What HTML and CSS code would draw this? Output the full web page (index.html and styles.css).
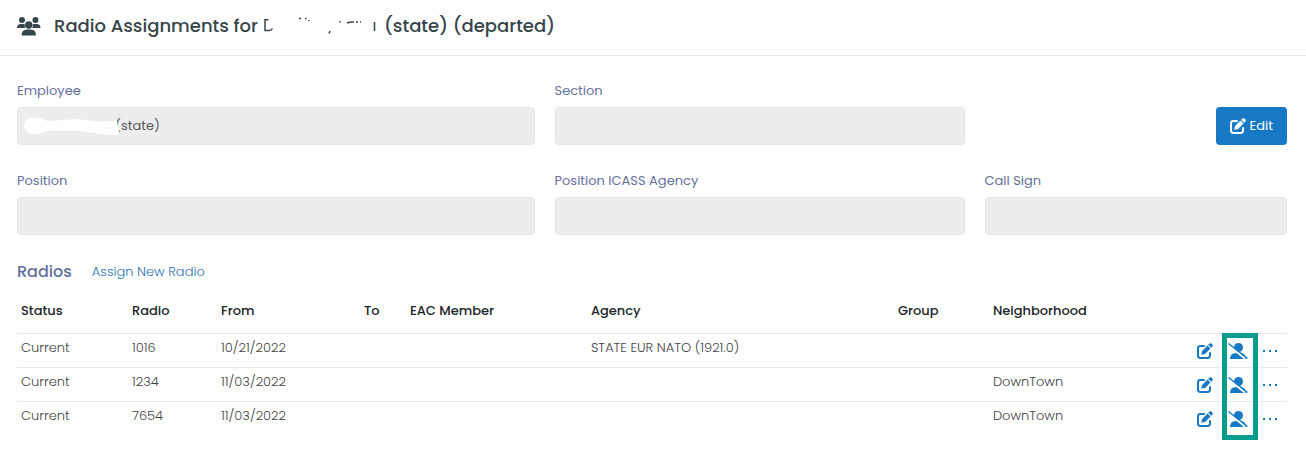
FILE: index.html
```
<!DOCTYPE html>
<html lang="en">

<head>
    <meta charset="UTF-8" />
    <meta name="viewport" content="width=device-width, initial-scale=1.0" />
    <title>Radio Assignments</title>
    <link rel="stylesheet" href="styles.css">
</head>

<body>
    <svg class="sprite" aria-hidden="true">
        <symbol id="icon-edit" viewBox="0 0 16 16">
            <path d="M7 3H3.400Q1 3 1 5.400V12.600Q1 15 3.400 15H10.600Q13 15 13 12.600V10" fill="none" stroke="currentColor" stroke-width="2" stroke-linecap="round" />
            <path d="M4.200 11.800L5.100 7.900L10.500 2.500L13.500 5.500L8.100 10.900Z" fill="currentColor" />
            <path d="M11.200 1.800L12.500 .6Q13.500 -.2 14.500 .6L15.400 1.500Q16.200 2.500 15.400 3.500L14.200 4.800Z" fill="currentColor" />
        </symbol>
        <symbol id="icon-unassign" viewBox="0 0 20 16">
            <circle cx="10.500" cy="4.500" r="4.500" fill="currentColor" />
            <path d="M2 16Q2 10 8 10H12Q18 10 18 16Z" fill="currentColor" />
            <path d="M0 2L17 15.500" stroke="#fff" stroke-width="2" />
            <path d="M.5 .5L19.500 15.500" stroke="currentColor" stroke-width="1.400" />
        </symbol>
    </svg>

    <header class="page-header">
        <svg class="users-icon" viewBox="0 0 24 19" aria-hidden="true">
            <circle cx="5" cy="3" r="3" />
            <circle cx="18.500" cy="3" r="3" />
            <path d="M0 11Q0 7 4 7H6.500Q7.300 7 8 7.400Q7.300 9.200 8.300 11Z" />
            <path d="M23.500 11Q23.500 7 19.500 7H17Q16.200 7 15.500 7.400Q16.200 9.200 15.200 11Z" />
            <circle cx="11.750" cy="8" r="3.700" />
            <path d="M4.500 18.500Q4.500 12.500 10 12.500H13.500Q19 12.500 19 18.500Z" />
        </svg>
        <h1>
            <span>Radio Assignments for</span>
            <svg class="scraps" viewBox="0 0 116 18" aria-hidden="true">
                <path d="M5.500 2.700H2V13.500H6Q8.500 13.500 9.500 11.500" />
                <path d="M36 1.500H38M42 1.500H43.500M46 3V4M67 14L66 16.500M77 4V5.500M84 6L88 5H91M93 5H95M97 5H98M111.500 5V14" />
            </svg>
            <span>(state) (departed)</span>
        </h1>
    </header>

    <main>
        <form class="details">
            <div class="field wide">
                <label for="employee">Employee</label>
                <div class="masked">
                    <input id="employee" type="text" value="(state)" readonly>
                    <svg class="smear" viewBox="0 0 96 18" aria-hidden="true">
                        <path d="M3 2Q8 0 15 1Q19 3 24 4L54 2Q60 3 68 4Q76 5 84 4H93Q93 8 95 11V18H84L56 14Q35 13 23 14Q15 18 6 17Q1 14 0 9Q0 5 3 2Z" />
                    </svg>
                </div>
            </div>
            <div class="field medium">
                <label for="section">Section</label>
                <input id="section" type="text" readonly>
            </div>
            <div class="field narrow actions">
                <button type="button" class="edit-button">
                    <svg class="icon"><use href="#icon-edit" /></svg>
                    Edit
                </button>
            </div>
            <div class="field wide">
                <label for="position">Position</label>
                <input id="position" type="text" readonly>
            </div>
            <div class="field medium">
                <label for="agency">Position ICASS Agency</label>
                <input id="agency" type="text" readonly>
            </div>
            <div class="field narrow">
                <label for="call-sign">Call Sign</label>
                <input id="call-sign" type="text" readonly>
            </div>
        </form>

        <div class="section-title">
            <h2>Radios</h2>
            <a href="#">Assign New Radio</a>
        </div>

        <div class="radios">
            <table>
                <thead>
                    <tr>
                        <th class="col-status">Status</th>
                        <th class="col-radio">Radio</th>
                        <th class="col-from">From</th>
                        <th class="col-to">To</th>
                        <th class="col-eac">EAC Member</th>
                        <th class="col-agency">Agency</th>
                        <th class="col-group">Group</th>
                        <th class="col-area">Neighborhood</th>
                        <th class="col-tools"></th>
                    </tr>
                </thead>
                <tbody>
                    <tr>
                        <td>Current</td>
                        <td>1016</td>
                        <td>10/21/2022</td>
                        <td></td>
                        <td></td>
                        <td>STATE EUR NATO (1921.0)</td>
                        <td></td>
                        <td></td>
                        <td>
                            <div class="tools">
                                <a href="#" aria-label="Edit"><svg class="icon"><use href="#icon-edit" /></svg></a>
                                <a href="#" aria-label="Unassign"><svg class="icon-wide"><use href="#icon-unassign" /></svg></a>
                                <a href="#" class="more" aria-label="More"><i></i><i></i><i></i></a>
                            </div>
                        </td>
                    </tr>
                    <tr>
                        <td>Current</td>
                        <td>1234</td>
                        <td>11/03/2022</td>
                        <td></td>
                        <td></td>
                        <td></td>
                        <td></td>
                        <td>DownTown</td>
                        <td>
                            <div class="tools">
                                <a href="#" aria-label="Edit"><svg class="icon"><use href="#icon-edit" /></svg></a>
                                <a href="#" aria-label="Unassign"><svg class="icon-wide"><use href="#icon-unassign" /></svg></a>
                                <a href="#" class="more" aria-label="More"><i></i><i></i><i></i></a>
                            </div>
                        </td>
                    </tr>
                    <tr>
                        <td>Current</td>
                        <td>7654</td>
                        <td>11/03/2022</td>
                        <td></td>
                        <td></td>
                        <td></td>
                        <td></td>
                        <td>DownTown</td>
                        <td>
                            <div class="tools">
                                <a href="#" aria-label="Edit"><svg class="icon"><use href="#icon-edit" /></svg></a>
                                <a href="#" aria-label="Unassign"><svg class="icon-wide"><use href="#icon-unassign" /></svg></a>
                                <a href="#" class="more" aria-label="More"><i></i><i></i><i></i></a>
                            </div>
                        </td>
                    </tr>
                </tbody>
            </table>
            <div class="highlight"></div>
        </div>
    </main>
</body>

</html>
```
FILE: styles.css
```
* {
    box-sizing: border-box;
    margin: 0;
    padding: 0;
}

body {
    background-color: #fff;
    color: #444;
    font-family: Poppins, Inter, sans-serif;
    font-size: 13px;
    line-height: 20px;
}

a {
    color: #2f74b5;
    text-decoration: none;
}

.sprite {
    display: block;
    height: 0;
    width: 0;
}

.page-header {
    align-items: center;
    border-bottom: 1px solid #ebebeb;
    display: flex;
    gap: 13px;
    padding: 12px 17px 15px;
}

.users-icon {
    fill: #36454a;
    height: 19px;
    width: 24px;
}

h1 {
    align-items: center;
    color: #36454a;
    display: flex;
    font-size: 18px;
    font-weight: 500;
    gap: 5px;
    line-height: 28px;
}

.scraps {
    fill: none;
    height: 18px;
    stroke: #36454a;
    stroke-width: 1.5;
    width: 116px;
}

main {
    padding: 25px 19px 20px 17px;
}

.details {
    display: grid;
    gap: 26px 20px;
    grid-template-columns: repeat(12, minmax(0, 1fr));
}

.field {
    display: flex;
    flex-direction: column;
    gap: 6px;
}

.wide {
    grid-column: span 5;
}

.medium {
    grid-column: span 4;
}

.narrow {
    grid-column: span 3;
}

label {
    color: #64709c;
}

input {
    background-color: #ededed;
    border: 1px solid #e2e4ee;
    border-radius: 4px;
    color: #555;
    font: inherit;
    height: 38px;
    padding: 0 8px;
    width: 100%;
}

.masked {
    position: relative;
}

.masked input {
    display: block;
    padding-left: 97px;
}

.smear {
    fill: #fff;
    height: 18px;
    left: 7px;
    position: absolute;
    top: 10px;
    width: 96px;
}

.actions {
    align-items: flex-end;
    justify-content: flex-end;
}

.edit-button {
    align-items: center;
    background-color: #1779c4;
    border: none;
    border-radius: 4px;
    color: #fff;
    cursor: pointer;
    display: flex;
    font: inherit;
    gap: 4px;
    height: 38px;
    padding: 0 14px;
}

.icon {
    display: block;
    height: 16px;
    width: 16px;
}

.icon-wide {
    display: block;
    height: 16px;
    width: 20px;
}

.section-title {
    align-items: center;
    display: flex;
    gap: 20px;
    margin-top: 27px;
}

.section-title a {
    font-weight: 300;
}

h2 {
    color: #64709c;
    font-size: 16px;
    font-weight: 500;
    line-height: 20px;
}

.radios {
    position: relative;
}

table {
    border-collapse: collapse;
    margin-top: 15px;
    table-layout: fixed;
    width: 100%;
}

th {
    color: #212529;
    font-weight: 500;
    padding: 4px 4px 12px;
    text-align: left;
}

td {
    border-top: 1px solid #e9eaf0;
    font-weight: 300;
    padding: 4px;
    vertical-align: top;
}

.col-status {
    width: 8.74%;
}

.col-radio {
    width: 7.01%;
}

.col-from {
    width: 11.26%;
}

.col-to {
    width: 3.62%;
}

.col-eac {
    width: 14.25%;
}

.col-agency {
    width: 24.17%;
}

.col-group {
    width: 7.48%;
}

.col-area {
    width: 16.07%;
}

.col-tools {
    width: 7.4%;
}

.tools {
    align-items: center;
    display: flex;
    gap: 15px;
    height: 25px;
}

.tools a {
    color: #1779c4;
}

.more {
    display: flex;
    gap: 4px;
}

.more i {
    background-color: #1779c4;
    height: 2px;
    width: 2px;
}

/* frame around the unassign buttons */
.highlight {
    border: 5px solid #0a9c8c;
    height: 107px;
    pointer-events: none;
    position: absolute;
    right: 29px;
    bottom: -5px;
    width: 36px;
}
```
